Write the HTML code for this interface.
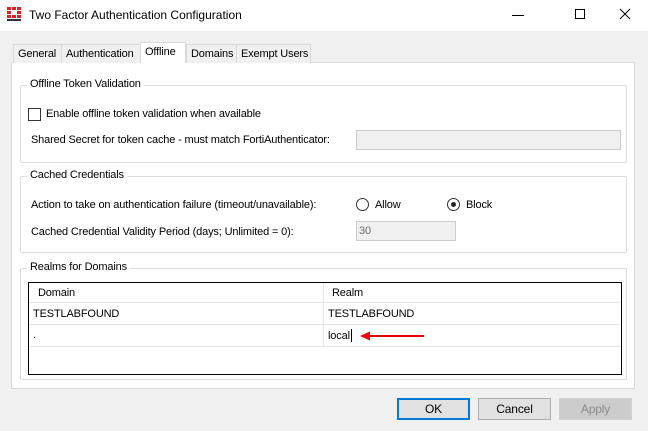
<!DOCTYPE html>
<html><head><style>
*{box-sizing:border-box;margin:0;padding:0}
body{width:648px;height:431px;background:#f0f0f0;font-family:"Liberation Sans",sans-serif;font-size:11px;letter-spacing:-0.15px;color:#000;position:relative;overflow:hidden}
.a{position:absolute;white-space:nowrap}
.title{left:0;top:0;width:648px;height:31px;background:#fff}
.tab{position:absolute;top:44px;height:19px;border:1px solid #d9d9d9;border-bottom:none;background:#f0f0f0;padding:3px 0 0 4px;font-size:11px;white-space:nowrap;overflow:hidden}
.panel{left:11px;top:62px;width:624px;height:327px;background:#fff;border:1px solid #d9d9d9}
.grp{position:absolute;border:1px solid #dcdcdc;border-radius:2px}
.grp .lg{position:absolute;top:-8px;left:6px;background:#fff;padding:0 3px;white-space:nowrap}
.tb{position:absolute;border:1px solid #ccc;background:#f0f0f0;color:#6d6d6d;padding:3px 2px}
.radio{position:absolute;width:13px;height:13px;border:1px solid #333;border-radius:50%;background:#fff}
.btn{position:absolute;top:398px;width:73px;height:22px;border:1px solid #adadad;background:#e1e1e1;text-align:center;line-height:20px;font-size:12px}
</style></head><body>
<div class="a title"></div>
<svg class="a" style="left:6px;top:6px" width="16" height="16" viewBox="0 0 16 16">
<rect x="1" y="1" width="4" height="3" fill="#d22"/><rect x="6" y="1" width="4" height="3" fill="#d22"/><rect x="11" y="1" width="4" height="3" fill="#d22"/>
<rect x="1" y="5" width="4" height="3" fill="#d22"/><rect x="11" y="5" width="4" height="3" fill="#d22"/>
<rect x="1" y="9" width="4" height="3" fill="#d22"/><rect x="6" y="9" width="4" height="3" fill="#d22"/><rect x="11" y="9" width="4" height="3" fill="#d22"/>
<rect x="1" y="13" width="14" height="2" fill="#333"/></svg>
<div class="a" style="left:29px;top:8px;font-size:12px;letter-spacing:0">Two Factor Authentication Configuration</div>
<div class="a" style="left:512px;top:15px;width:12px;height:1px;background:#000"></div>
<div class="a" style="left:575px;top:9px;width:10px;height:10px;border:1px solid #000"></div>
<svg class="a" style="left:619px;top:8px" width="12" height="12"><path d="M1 1L11 11M11 1L1 11" stroke="#000" stroke-width="1"/></svg>

<div class="a panel"></div>
<div class="tab" style="left:13px;width:49px">General</div>
<div class="tab" style="left:61px;width:80px">Authentication</div>
<div class="tab" style="left:140px;top:42px;height:21px;width:46px;background:#fff;padding-top:3px">Offline</div>
<div class="tab" style="left:186px;width:51px">Domains</div>
<div class="tab" style="left:236px;width:75px">Exempt Users</div>
<div class="a" style="left:141px;top:62px;width:44px;height:2px;background:#fff"></div>

<div class="grp" style="left:20px;top:85px;width:607px;height:78px"><div class="lg">Offline Token Validation</div></div>
<div class="a" style="left:28px;top:108px;width:13px;height:13px;border:1px solid #333;background:#fff"></div>
<div class="a" style="left:46px;top:108px">Enable offline token validation when available</div>
<div class="a" style="left:31px;top:134px">Shared Secret for token cache - must match FortiAuthenticator:</div>
<div class="tb" style="left:356px;top:130px;width:265px;height:20px"></div>

<div class="grp" style="left:20px;top:176px;width:607px;height:77px"><div class="lg">Cached Credentials</div></div>
<div class="a" style="left:31px;top:199px">Action to take on authentication failure (timeout/unavailable):</div>
<div class="radio" style="left:356px;top:198px"></div>
<div class="a" style="left:375px;top:199px">Allow</div>
<div class="radio" style="left:447px;top:198px"><div style="position:absolute;left:3px;top:3px;width:5px;height:5px;border-radius:50%;background:#222"></div></div>
<div class="a" style="left:466px;top:199px">Block</div>
<div class="a" style="left:31px;top:226px">Cached Credential Validity Period (days; Unlimited = 0):</div>
<div class="tb" style="left:356px;top:221px;width:100px;height:20px">30</div>

<div class="grp" style="left:20px;top:268px;width:607px;height:112px"><div class="lg">Realms for Domains</div></div>
<div class="a" style="left:28px;top:282px;width:594px;height:93px;border:1px solid #000;background:#fff"></div>
<div class="a" style="left:29px;top:283px;width:592px;height:20px;border-bottom:1px solid #e5e5e5"></div>
<div class="a" style="left:38px;top:287px">Domain</div>
<div class="a" style="left:332px;top:287px">Realm</div>
<div class="a" style="left:323px;top:283px;width:1px;height:63px;background:#e5e5e5"></div>
<div class="a" style="left:29px;top:324px;width:592px;height:1px;background:#e5e5e5"></div>
<div class="a" style="left:29px;top:346px;width:592px;height:1px;background:#e5e5e5"></div>
<div class="a" style="left:33px;top:308px">TESTLABFOUND</div>
<div class="a" style="left:328px;top:308px">TESTLABFOUND</div>
<div class="a" style="left:33px;top:329px">.</div>
<div class="a" style="left:328px;top:330px">local</div>
<div class="a" style="left:351px;top:329px;width:1px;height:13px;background:#000"></div>
<svg class="a" style="left:358px;top:330px" width="70" height="12"><path d="M66 6H10" stroke="#e00" stroke-width="2"/><path d="M2 6L12 1.5V10.5Z" fill="#e00"/></svg>

<div class="btn" style="left:397px;border:2px solid #0078d7;line-height:18px">OK</div>
<div class="btn" style="left:478px">Cancel</div>
<div class="btn" style="left:559px;border-color:#d0d0d0;background:#ccc;color:#8a8a8a">Apply</div>
</body></html>
